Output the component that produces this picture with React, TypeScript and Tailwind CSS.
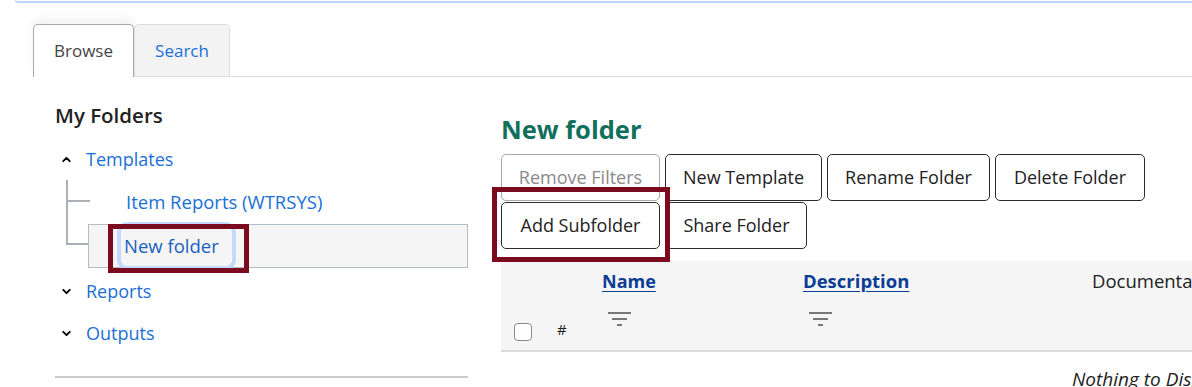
import { ChevronDown, ChevronUp } from 'lucide-react';

const font = { fontFamily: '"Open Sans", "Noto Sans", sans-serif' };

const FilterIcon = () => (
  <svg width="24" height="16" viewBox="0 0 24 16" className="block">
    <rect x="0" y="0" width="23" height="2" fill="#777" />
    <rect x="4" y="6" width="15" height="2" fill="#777" />
    <rect x="9" y="12" width="5" height="2" fill="#777" />
  </svg>
);

type BtnProps = { label: string; w: string; disabled?: boolean };

const Btn = ({ label, w, disabled }: BtnProps) => (
  <button
    className={
      disabled
        ? `${w} h-[47px] rounded-[5px] border border-[#a8a8a8] text-[18px] text-[#8a8a8a] bg-white whitespace-nowrap`
        : `${w} h-[47px] rounded-[5px] border border-[#2b2b2b] text-[18px] text-[#222] bg-white whitespace-nowrap`
    }
  >
    {label}
  </button>
);

const App = () => {
  return (
    <div className="w-[1192px] h-[387px] overflow-hidden bg-white relative" style={font}>
      {/* alert box bottom edge */}
      <div className="ml-[15px] h-[3px] border-b-2 border-l border-[#bcd6fa] rounded-bl-[4px]" />

      {/* Tabs */}
      <div className="ml-[33px] mt-[21px] flex items-end border-b border-[#dcdcdc]">
        <div className="w-[101px] h-[53px] -mb-px flex items-center justify-center bg-white border border-b-0 border-[#a9a9a9] rounded-t-[5px] text-[17px] text-[#444] shadow-[0_-6px_10px_rgba(0,0,0,0.05)]">
          Browse
        </div>
        <div className="w-[96px] h-[52px] flex items-center justify-center bg-[#f3f3f3] border border-b-0 border-[#dcdcdc] rounded-t-[5px] text-[17px] text-[#1a6fd6]">
          Search
        </div>
      </div>

      <div className="flex">
        {/* Left: folder tree */}
        <div className="ml-[55px] w-[413px] shrink-0">
          <h2 className="mt-[24px] h-[28px] leading-[28px] text-[20.5px] font-semibold text-[#222]">My Folders</h2>

          <div className="mt-[12px] h-[36px] flex items-center">
            <ChevronUp size={13} strokeWidth={3.5} className="ml-[5px] text-black" />
            <span className="ml-[13px] text-[18px] text-[#1a6fd6]">Templates</span>
          </div>

          <div className="pl-[11px] pt-[3px]">
            {/* Item Reports row */}
            <div className="flex h-[44px]">
              <div className="w-[24px] shrink-0 flex flex-col">
                <div className="h-[22px] border-l-2 border-b-2 border-[#aab0b6]" />
                <div className="flex-1 border-l-2 border-[#aab0b6]" />
              </div>
              <div className="flex items-center pl-[36px] text-[18.5px] text-[#1a6fd6]">Item Reports (WTRSYS)</div>
            </div>

            {/* New folder row (selected) */}
            <div className="flex h-[44px]">
              <div className="w-[22px] shrink-0 flex flex-col">
                <div className="h-[21px] border-l-2 border-b-2 border-[#aab0b6]" />
              </div>
              <div className="flex-1 relative flex items-center border border-[#b5bcc4] bg-[#f5f5f5]">
                <span className="ml-[32px] pl-[3px] pr-[13px] py-[5px] rounded-[6px] ring-[4px] ring-[#c3dafc] text-[18.5px] text-[#1a5fc0] leading-[30px]">
                  New folder
                </span>
                <div className="absolute left-[19px] top-[-1px] w-[141px] h-[49px] border-[5px] border-[#7b0a1e]" />
              </div>
            </div>
          </div>

          <div className="mt-[2px] h-[42px] flex items-center">
            <ChevronDown size={13} strokeWidth={3.5} className="ml-[5px] text-black" />
            <span className="ml-[13px] text-[18px] text-[#1a6fd6]">Reports</span>
          </div>
          <div className="h-[42px] flex items-center">
            <ChevronDown size={13} strokeWidth={3.5} className="ml-[5px] text-black" />
            <span className="ml-[13px] text-[18px] text-[#1a6fd6]">Outputs</span>
          </div>

          <div className="mt-[22px] h-[2px] bg-[#cbcbcb]" />
        </div>

        {/* Right: folder content */}
        <div className="ml-[33px] flex-1 min-w-0">
          <h1 className="mt-[35px] h-[34px] leading-[34px] text-[25.5px] font-bold text-[#10705c]">New folder</h1>

          <div className="mt-[8px] flex gap-[5px]">
            <Btn label="Remove Filters" w="w-[159px]" disabled />
            <Btn label="New Template" w="w-[157px]" />
            <Btn label="Rename Folder" w="w-[163px]" />
            <Btn label="Delete Folder" w="w-[150px]" />
          </div>
          <div className="mt-[1px] flex gap-[6px] relative">
            <Btn label="Add Subfolder" w="w-[159px]" />
            <Btn label="Share Folder" w="w-[141px]" />
            <div className="absolute left-[-9px] top-[-15px] w-[178px] h-[75px] border-[5px] border-[#7b0a1e]" />
          </div>

          {/* Table header */}
          <div className="mt-[12px] w-[900px] h-[91px] bg-[#f5f5f5] border-b-2 border-[#dddddd] flex pl-[13px]">
            <div className="w-[43px] shrink-0 flex items-end pb-[9px]">
              <div className="w-[18px] h-[18px] rounded-[4px] border border-[#8a8a8a] bg-white" />
            </div>
            <div className="w-[45px] shrink-0 flex items-end pb-[10px] text-[15px] text-[#222]">#</div>
            <div className="w-[201px] shrink-0 pt-[8px]">
              <div className="text-[18px] font-bold text-[#0b3d95] underline underline-offset-[3px] leading-[24px]">Name</div>
              <div className="mt-[19px] ml-[6px]">
                <FilterIcon />
              </div>
            </div>
            <div className="w-[289px] shrink-0 pt-[8px]">
              <div className="text-[18.5px] font-bold text-[#0b3d95] underline underline-offset-[3px] leading-[24px]">Description</div>
              <div className="mt-[19px] ml-[6px]">
                <FilterIcon />
              </div>
            </div>
            <div className="shrink-0 pt-[8px]">
              <div className="text-[18.5px] text-[#222] leading-[24px] whitespace-nowrap">Documentation</div>
            </div>
          </div>

          <div className="mt-[13px] pl-[571px] text-[19px] italic text-[#222] whitespace-nowrap">Nothing to Display</div>
        </div>
      </div>
    </div>
  );
};

export default App;
